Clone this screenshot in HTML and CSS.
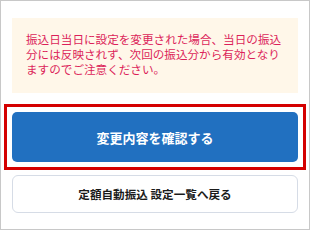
FILE: index.html
```html
<!DOCTYPE html>
<html lang="ja">
  <head>
    <meta charset="utf-8">
    <title>定額自動振込 設定変更</title>
    <link rel="stylesheet" href="styles.css">
  </head>
  <body>
    <div class="frame">
      <div class="notice">
        振込日当日に設定を変更された場合、当日の振込分には反映されず、次回の振込分から有効となりますのでご注意ください。
      </div>

      <div class="actions">
        <div class="highlight">
          <button class="btn btn-primary">変更内容を確認する</button>
        </div>
        <button class="btn btn-secondary">定額自動振込 設定一覧へ戻る</button>
      </div>
    </div>
  </body>
</html>
```

FILE: styles.css
```css
html,
body {
  margin: 0;
  padding: 0;
}

body {
  font-family: "Noto Sans CJK JP", "Noto Sans", sans-serif;
  background: #fff;
}

.frame {
  box-sizing: border-box;
  width: 310px;
  height: 230px;
  border: 1px solid #c8c8c8;
  padding: 17px 11px 0;
}

.notice {
  background: #fff7e9;
  color: #dc1f5a;
  font-size: 11.6px;
  line-height: 15px;
  padding: 14px 13px 16px 14px;
}

.actions {
  display: flex;
  flex-direction: column;
  gap: 5px;
  margin-top: 11px;
}

/* red frame round the highlighted action */
.highlight {
  border: 3px solid #d40000;
  padding: 5px;
  margin: 0 -8px;
}

.btn {
  font-family: inherit;
  font-weight: bold;
  width: 100%;
  cursor: pointer;
  padding: 0;
  display: block;
}

.btn-primary {
  height: 50px;
  background: #2170c0;
  color: #fff;
  border: none;
  border-radius: 5px;
  font-size: 13px;
}

.btn-secondary {
  height: 38px;
  background: #fff;
  color: #1a1a1a;
  border: 1px solid #d6dce6;
  border-radius: 6px;
  font-size: 11.6px;
}
```
